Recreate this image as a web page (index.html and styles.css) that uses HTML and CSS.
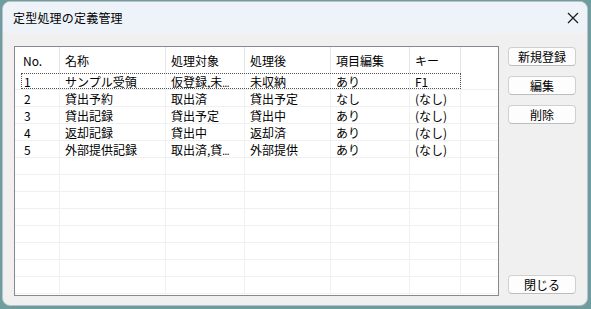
FILE: index.html
```html
<!DOCTYPE html>
<html lang="ja">
<head>
<meta charset="utf-8">
<title>定型処理の定義管理</title>
<link rel="stylesheet" href="styles.css">
</head>
<body>
<div class="window">
  <div class="titlebar">
    <span class="title">定型処理の定義管理</span>
    <span class="close">
      <svg width="12" height="12" viewBox="0 0 12 12"><path d="M1 1 L11 11 M11 1 L1 11" stroke="#1b1b1b" stroke-width="1.2" fill="none"/></svg>
    </span>
  </div>
  <div class="content">
    <div class="list">
      <div class="row header">
        <div class="cell first">No.</div>
        <div class="cell">名称</div>
        <div class="cell">処理対象</div>
        <div class="cell">処理後</div>
        <div class="cell">項目編集</div>
        <div class="cell">キー</div>
        <div class="cell last"></div>
      </div>
      <div class="row focus">
        <div class="cell first">1</div>
        <div class="cell">サンプル受領</div>
        <div class="cell">仮登録,未<span class="ell">...</span></div>
        <div class="cell">未収納</div>
        <div class="cell">あり</div>
        <div class="cell">F1</div>
        <div class="cell last"></div>
      </div>
      <div class="row">
        <div class="cell first">2</div>
        <div class="cell">貸出予約</div>
        <div class="cell">取出済</div>
        <div class="cell">貸出予定</div>
        <div class="cell">なし</div>
        <div class="cell">(なし)</div>
        <div class="cell last"></div>
      </div>
      <div class="row">
        <div class="cell first">3</div>
        <div class="cell">貸出記録</div>
        <div class="cell">貸出予定</div>
        <div class="cell">貸出中</div>
        <div class="cell">あり</div>
        <div class="cell">(なし)</div>
        <div class="cell last"></div>
      </div>
      <div class="row">
        <div class="cell first">4</div>
        <div class="cell">返却記録</div>
        <div class="cell">貸出中</div>
        <div class="cell">返却済</div>
        <div class="cell">あり</div>
        <div class="cell">(なし)</div>
        <div class="cell last"></div>
      </div>
      <div class="row">
        <div class="cell first">5</div>
        <div class="cell">外部提供記録</div>
        <div class="cell">取出済,貸<span class="ell">...</span></div>
        <div class="cell">外部提供</div>
        <div class="cell">あり</div>
        <div class="cell">(なし)</div>
        <div class="cell last"></div>
      </div>
      <div class="row"><div class="cell first"></div><div class="cell"></div><div class="cell"></div><div class="cell"></div><div class="cell"></div><div class="cell"></div><div class="cell last"></div></div>
      <div class="row"><div class="cell first"></div><div class="cell"></div><div class="cell"></div><div class="cell"></div><div class="cell"></div><div class="cell"></div><div class="cell last"></div></div>
      <div class="row"><div class="cell first"></div><div class="cell"></div><div class="cell"></div><div class="cell"></div><div class="cell"></div><div class="cell"></div><div class="cell last"></div></div>
      <div class="row"><div class="cell first"></div><div class="cell"></div><div class="cell"></div><div class="cell"></div><div class="cell"></div><div class="cell"></div><div class="cell last"></div></div>
      <div class="row"><div class="cell first"></div><div class="cell"></div><div class="cell"></div><div class="cell"></div><div class="cell"></div><div class="cell"></div><div class="cell last"></div></div>
      <div class="row"><div class="cell first"></div><div class="cell"></div><div class="cell"></div><div class="cell"></div><div class="cell"></div><div class="cell"></div><div class="cell last"></div></div>
      <div class="row"><div class="cell first"></div><div class="cell"></div><div class="cell"></div><div class="cell"></div><div class="cell"></div><div class="cell"></div><div class="cell last"></div></div>
      <div class="row"><div class="cell first"></div><div class="cell"></div><div class="cell"></div><div class="cell"></div><div class="cell"></div><div class="cell"></div><div class="cell last"></div></div>
    </div>
    <div class="buttons">
      <button class="btn">新規登録</button>
      <button class="btn">編集</button>
      <button class="btn">削除</button>
      <button class="btn close-btn">閉じる</button>
    </div>
  </div>
</div>
</body>
</html>
```

FILE: styles.css
```css
html, body {
  margin: 0;
  padding: 0;
}
body {
  width: 591px;
  height: 309px;
  overflow: hidden;
  background: #6f9d9f;
  font-family: "Noto Sans CJK JP", "Noto Sans", sans-serif;
  font-size: 12px;
  color: #000;
}
.window {
  box-sizing: border-box;
  margin: 1px 3px 0 2px;
  width: 586px;
  height: 305px;
  background: #f0f0f0;
  border: 1px solid #b9c3c6;
  border-radius: 8px;
  overflow: hidden;
  display: flex;
  flex-direction: column;
}
.titlebar {
  height: 31px;
  flex: none;
  background: #eef3f9;
  display: flex;
  align-items: center;
  justify-content: space-between;
  padding: 0 8px 0 10px;
}
.title {
  font-size: 12px;
  letter-spacing: 0.2px;
  line-height: 16px;
}
.close {
  display: flex;
  align-items: center;
  width: 12px;
  height: 12px;
}
.content {
  flex: 1;
  display: flex;
  gap: 9px;
  padding: 13px 11px 9px 11px;
}
.list {
  box-sizing: border-box;
  width: 485px;
  height: 250px;
  background: #fff;
  border: 1px solid #868a90;
  overflow: hidden;
}
.row {
  display: grid;
  grid-template-columns: 45px 106px 79px 86px 79px 51px 1fr;
  height: 17px;
  position: relative;
}
.row.header {
  height: 26px;
}
.cell {
  box-sizing: border-box;
  border-right: 1px solid #f0f0f0;
  border-bottom: 1px solid #f0f0f0;
  padding-left: 5px;
  padding-top: 1px;
  line-height: 16px;
  white-space: nowrap;
  overflow: hidden;
}
.cell.first {
  padding-left: 9px;
}
.cell.last {
  border-right: none;
}
.ell {
  font-family: "Noto Sans", sans-serif;
  font-size: 10px;
  letter-spacing: -0.5px;
}
.header .cell {
  border-bottom: none;
  border-right-color: #e5e5e5;
  padding-top: 2px;
  line-height: 24px;
}
.header .cell.first {
  padding-left: 8px;
}
.focus::after {
  content: "";
  position: absolute;
  left: 6px;
  top: 0;
  width: 440px;
  height: 16px;
  box-sizing: border-box;
  border: 1px dotted #555;
  pointer-events: none;
}
.buttons {
  width: 68px;
  display: flex;
  flex-direction: column;
  gap: 10px;
  padding: 1px 0 2px 0;
}
.btn {
  box-sizing: border-box;
  width: 68px;
  height: 19px;
  margin: 0;
  padding: 0;
  font-family: "Noto Sans CJK JP", "Noto Sans", sans-serif;
  font-size: 12px;
  line-height: 17px;
  color: #000;
  background: #fdfdfd;
  border: 1px solid #d0d0d0;
  border-bottom-color: #bdbdbd;
  border-radius: 4px;
}
.close-btn {
  margin-top: auto;
}
```
